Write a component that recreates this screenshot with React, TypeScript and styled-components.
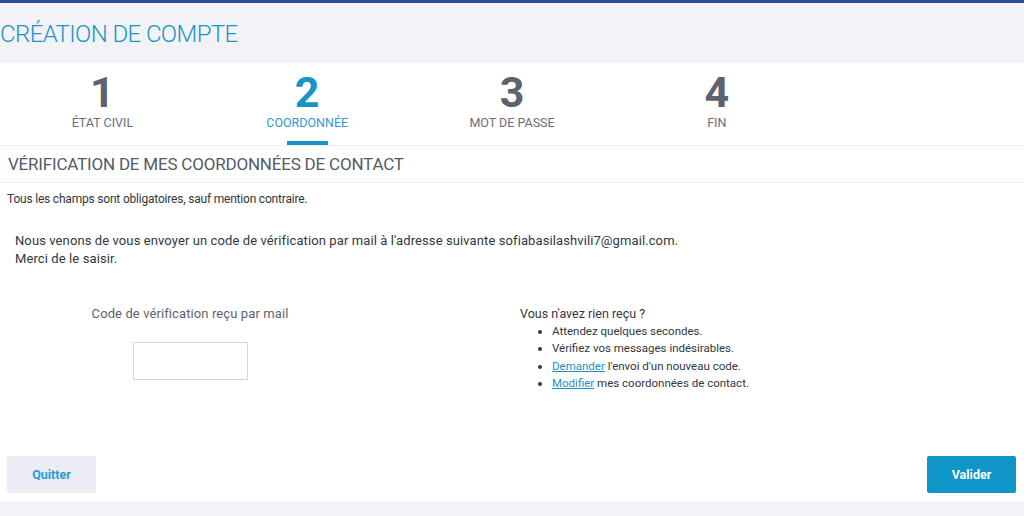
import React from 'react';
import styled, { createGlobalStyle } from 'styled-components';

const GlobalStyle = createGlobalStyle`
  html, body {
    margin: 0;
    padding: 0;
    background: #ffffff;
    font-family: Roboto, "Liberation Sans", Arial, sans-serif;
  }
  * { box-sizing: border-box; }
`;

const colors = {
  blue: '#1a93c6',
  dark: '#5d6270',
  text: '#333740',
  band: '#f3f3f7',
  line: '#eeeff2',
};

const Page = styled.div`
  width: 1024px;
  height: 516px;
  display: flex;
  flex-direction: column;
  border-top: 3px solid #2a4f97;
  overflow: hidden;
`;

const TitleBand = styled.header`
  height: 60px;
  background: ${colors.band};
  display: flex;
  align-items: center;
  padding-top: 2px;
`;

const Title = styled.h1`
  margin: 0;
  font-size: 24px;
  font-weight: 300;
  color: ${colors.blue};
  letter-spacing: -0.6px;
`;

const Steps = styled.nav`
  height: 83px;
  display: grid;
  grid-template-columns: repeat(5, 1fr);
  border-bottom: 1px solid ${colors.line};
`;

const Step = styled.div<{ $active?: boolean }>`
  position: relative;
  display: flex;
  flex-direction: column;
  align-items: center;
  padding-top: 7px;
  color: ${(p) => (p.$active ? colors.blue : colors.dark)};
  &::after {
    content: '';
    display: ${(p) => (p.$active ? 'block' : 'none')};
    position: absolute;
    bottom: 0;
    left: 50%;
    width: 41px;
    height: 4px;
    margin-left: -20px;
    background: ${colors.blue};
  }
`;

const StepNumber = styled.span`
  font-size: 43px;
  font-weight: 700;
  line-height: 44px;
`;

const StepLabel = styled.span`
  font-size: 12.5px;
  line-height: 16px;
  margin-top: 1px;
  color: inherit;
  opacity: 0.92;
`;

const SectionHeader = styled.h2`
  margin: 0;
  height: 37px;
  display: flex;
  align-items: center;
  padding-left: 8px;
  font-size: 17px;
  font-weight: 400;
  color: #555a65;
  letter-spacing: -0.2px;
  border-bottom: 1px solid ${colors.line};
`;

const Notice = styled.p`
  margin: 0;
  padding: 9px 0 0 7px;
  font-size: 12px;
  color: ${colors.text};
  letter-spacing: -0.2px;
`;

const Intro = styled.p`
  margin: 0;
  padding: 26px 0 0 15px;
  font-size: 13px;
  line-height: 18px;
  letter-spacing: 0.1px;
  color: ${colors.text};
`;

const Columns = styled.div`
  display: grid;
  grid-template-columns: 380px 1fr;
  padding-top: 38px;
  column-gap: 140px;
`;

const CodeField = styled.div`
  display: flex;
  flex-direction: column;
  align-items: center;
  gap: 20px;
`;

const FieldLabel = styled.label`
  font-size: 13px;
  color: ${colors.dark};
  line-height: 16px;
  letter-spacing: 0.1px;
`;

const CodeInput = styled.input`
  width: 115px;
  height: 38px;
  border: 1px solid #d6d7da;
  background: #fff;
  outline: none;
`;

const Help = styled.div`
  color: ${colors.text};
`;

const HelpTitle = styled.div`
  font-size: 12.5px;
  line-height: 16px;
`;

const HelpList = styled.ul`
  margin: 1px 0 0;
  padding-left: 32px;
  font-size: 11.5px;
  line-height: 17.3px;
  list-style: disc;
`;

const HelpLink = styled.a`
  color: ${colors.blue};
  text-decoration: underline;
`;

const Footer = styled.div`
  display: flex;
  justify-content: space-between;
  padding: 0 8px 0 7px;
  margin-top: 64px;
`;

const Button = styled.button<{ $primary?: boolean }>`
  width: 89px;
  height: 37px;
  border: none;
  border-radius: 2px;
  font-family: inherit;
  font-size: 12.5px;
  font-weight: 700;
  cursor: pointer;
  background: ${(p) => (p.$primary ? '#0f95c8' : '#ecedf5')};
  color: ${(p) => (p.$primary ? '#ffffff' : '#2a9bd0')};
`;

const BottomBand = styled.div`
  margin-top: auto;
  height: 15px;
  background: ${colors.band};
`;

const steps = [
  { n: '1', label: 'ÉTAT CIVIL' },
  { n: '2', label: 'COORDONNÉE', active: true },
  { n: '3', label: 'MOT DE PASSE' },
  { n: '4', label: 'FIN' },
];

function App() {
  return (
    <>
      <GlobalStyle />
      <Page>
        <TitleBand>
          <Title>CRÉATION DE COMPTE</Title>
        </TitleBand>
        <Steps>
          {steps.map((s) => (
            <Step key={s.n} $active={s.active}>
              <StepNumber>{s.n}</StepNumber>
              <StepLabel>{s.label}</StepLabel>
            </Step>
          ))}
        </Steps>
        <SectionHeader>VÉRIFICATION DE MES COORDONNÉES DE CONTACT</SectionHeader>
        <Notice>Tous les champs sont obligatoires, sauf mention contraire.</Notice>
        <Intro>
          Nous venons de vous envoyer un code de vérification par mail à l'adresse suivante
          sofiabasilashvili7@gmail.com.
          <br />
          Merci de le saisir.
        </Intro>
        <Columns>
          <CodeField>
            <FieldLabel htmlFor="code">Code de vérification reçu par mail</FieldLabel>
            <CodeInput id="code" type="text" />
          </CodeField>
          <Help>
            <HelpTitle>Vous n'avez rien reçu ?</HelpTitle>
            <HelpList>
              <li>Attendez quelques secondes.</li>
              <li>Vérifiez vos messages indésirables.</li>
              <li>
                <HelpLink href="#">Demander</HelpLink> l'envoi d'un nouveau code.
              </li>
              <li>
                <HelpLink href="#">Modifier</HelpLink> mes coordonnées de contact.
              </li>
            </HelpList>
          </Help>
        </Columns>
        <Footer>
          <Button>Quitter</Button>
          <Button $primary>Valider</Button>
        </Footer>
        <BottomBand />
      </Page>
    </>
  );
}

export default App;
